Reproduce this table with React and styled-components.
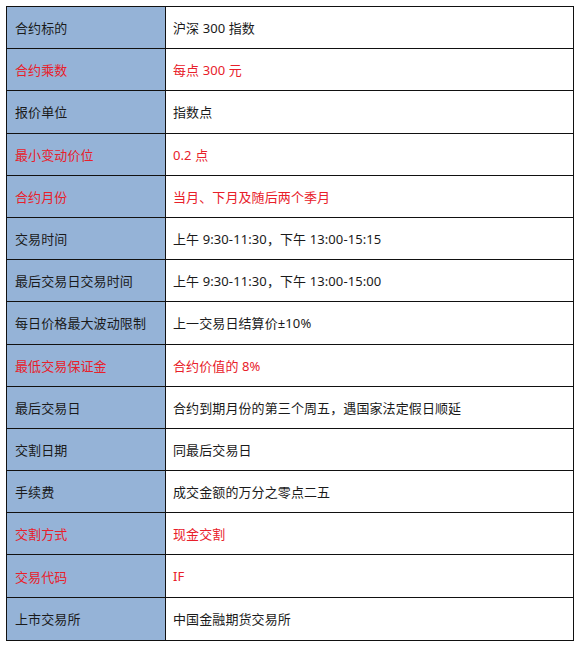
import React from "react";
import styled, { createGlobalStyle } from "styled-components";

const Global = createGlobalStyle`
  html, body { margin: 0; padding: 0; background: #ffffff; }
  body { font-family: "Noto Sans", "Noto Sans CJK SC", sans-serif; }
`;

const Page = styled.div`
  padding: 6px;
  width: 580px;
  box-sizing: border-box;
`;

const Table = styled.div`
  display: grid;
  grid-template-columns: 159px 1fr;
  grid-auto-rows: 42.2px;
  width: 568px;
  border: 1.5px solid #111;
  box-sizing: border-box;
`;

const Cell = styled.div`
  display: flex;
  align-items: center;
  box-sizing: border-box;
  font-size: 13px;
  letter-spacing: 0.1px;
  color: ${(p) => (p.$red ? "#e8202a" : "#1a1a1a")};
  border-bottom: ${(p) => (p.$last ? "none" : "1.5px solid #111")};
`;

const Label = styled(Cell)`
  background: #95b3d7;
  padding-left: 8px;
  border-right: 1.5px solid #111;
`;

const Value = styled(Cell)`
  background: #ffffff;
  padding-left: 7px;
`;

const rows = [
  ["合约标的", "沪深 300 指数", false],
  ["合约乘数", "每点 300 元", true],
  ["报价单位", "指数点", false],
  ["最小变动价位", "0.2 点", true],
  ["合约月份", "当月、下月及随后两个季月", true],
  ["交易时间", "上午 9:30-11:30，下午 13:00-15:15", false],
  ["最后交易日交易时间", "上午 9:30-11:30，下午 13:00-15:00", false],
  ["每日价格最大波动限制", "上一交易日结算价±10%", false],
  ["最低交易保证金", "合约价值的 8%", true],
  ["最后交易日", "合约到期月份的第三个周五，遇国家法定假日顺延", false],
  ["交割日期", "同最后交易日", false],
  ["手续费", "成交金额的万分之零点二五", false],
  ["交割方式", "现金交割", true],
  ["交易代码", "IF", true],
  ["上市交易所", "中国金融期货交易所", false],
];

export default function App() {
  return (
    <Page>
      <Global />
      <Table>
        {rows.map(([k, v, red], i) => {
          const last = i === rows.length - 1;
          return (
            <React.Fragment key={k}>
              <Label $red={red} $last={last}>{k}</Label>
              <Value $red={red} $last={last}>{v}</Value>
            </React.Fragment>
          );
        })}
      </Table>
    </Page>
  );
}
